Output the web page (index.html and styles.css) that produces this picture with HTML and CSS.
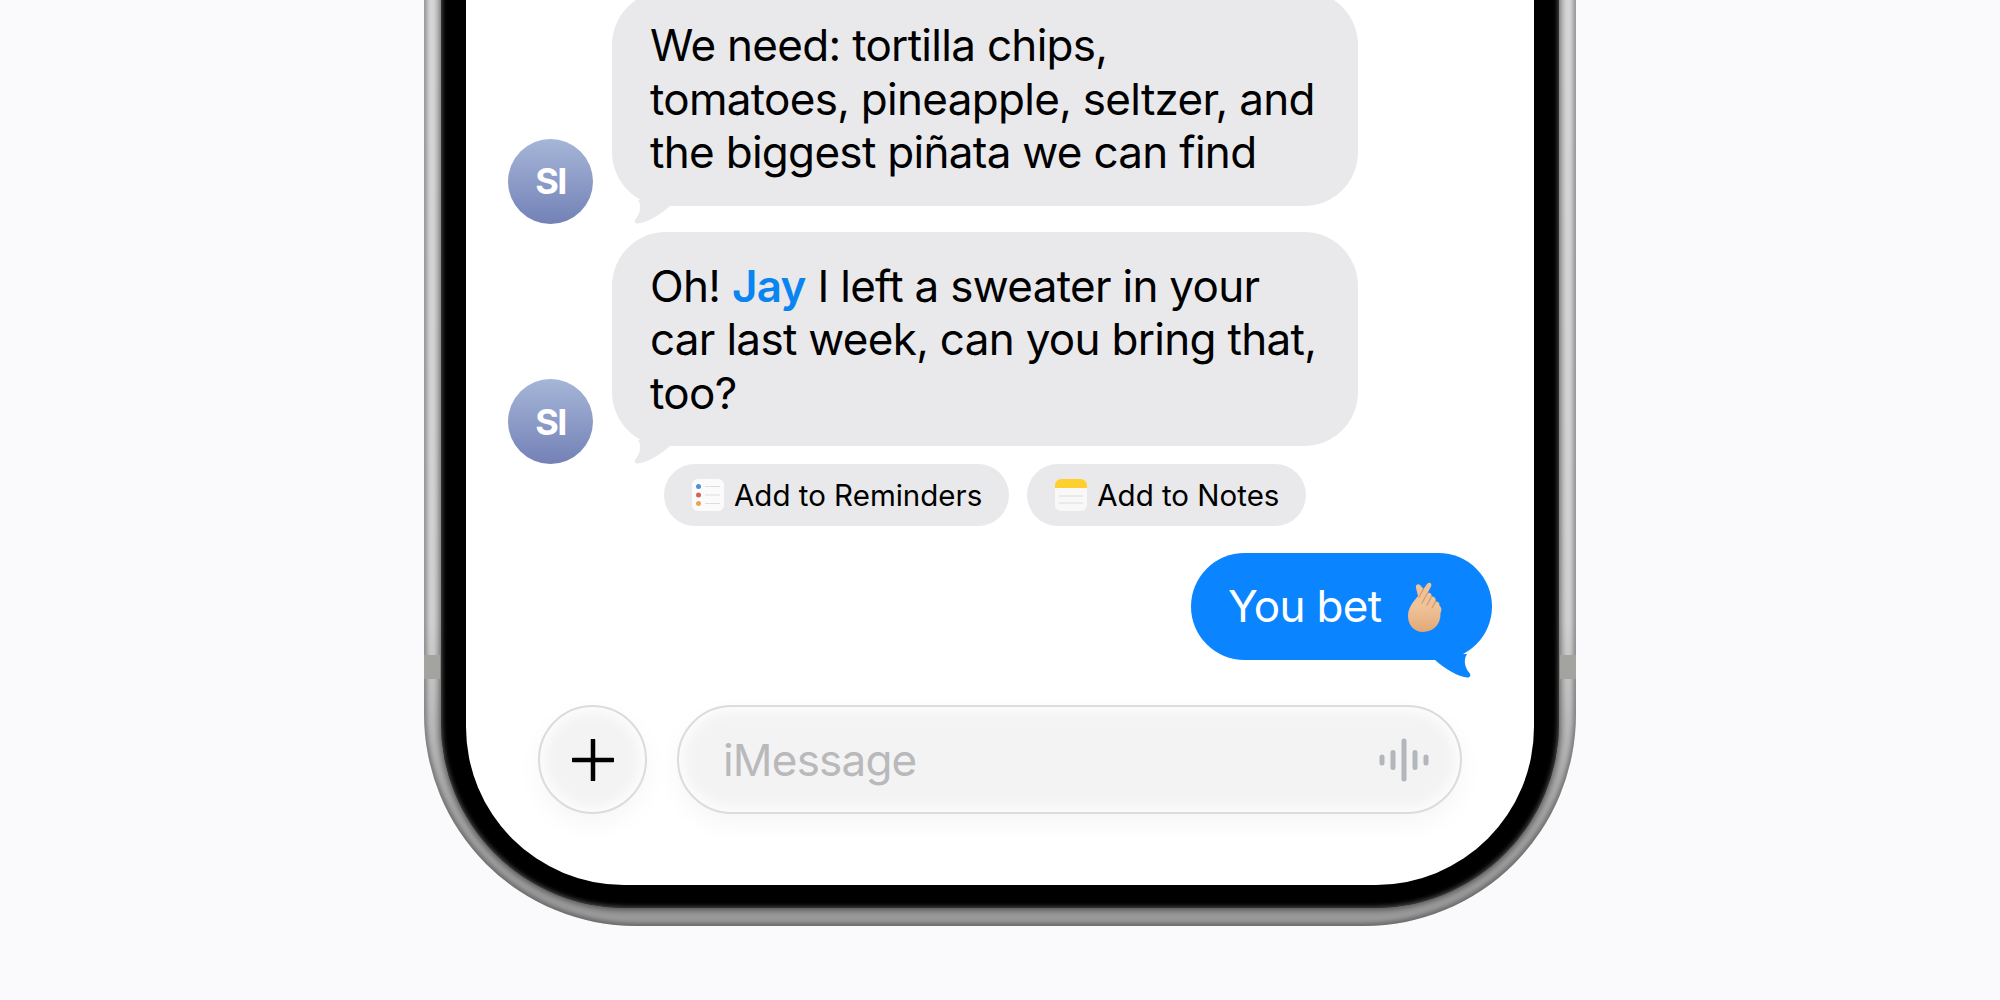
FILE: index.html
```html
<!DOCTYPE html>
<html lang="en">

<head>
    <meta charset="UTF-8">
    <title>Messages</title>
    <link rel="stylesheet" href="styles.css">
</head>

<body>
    <div class="phone">
        <i class="band band-left"></i>
        <i class="band band-right"></i>
        <div class="bezel">
            <div class="screen">
                <div class="thread">
                    <div class="row">
                        <div class="avatar">SI</div>
                        <div class="bubble">
                            We need: tortilla chips,<br>tomatoes, pineapple, seltzer, and<br>the biggest piñata we can find
                            <svg class="tail" viewBox="0 0 44 24"><path d="M12 0C16 6 14 14 9.500 19C8 21 8.500 24 12 23.500C22 22 34 15 44 6V0Z"/></svg>
                        </div>
                    </div>
                    <div class="row row-second">
                        <div class="avatar">SI</div>
                        <div class="bubble">
                            Oh! <span class="mention">Jay</span> I left a sweater in your<br>car last week, can you bring that,<br>too?
                            <svg class="tail" viewBox="0 0 44 24"><path d="M12 0C16 6 14 14 9.500 19C8 21 8.500 24 12 23.500C22 22 34 15 44 6V0Z"/></svg>
                        </div>
                    </div>
                    <div class="chips">
                        <div class="chip">
                            <svg class="chip-icon" viewBox="0 0 32 32">
                                <rect width="32" height="32" rx="6" fill="#fbfbfb"/>
                                <circle cx="6.500" cy="7.500" r="2.500" fill="#4d8fd8"/>
                                <circle cx="6.500" cy="16" r="2.500" fill="#d8605a"/>
                                <circle cx="6.500" cy="24.500" r="2.500" fill="#eca552"/>
                                <path d="M13 7.500H28M13 16H28M13 24.500H28" stroke="#dedede" stroke-width="1"/>
                            </svg>
                            Add to Reminders
                        </div>
                        <div class="chip">
                            <svg class="chip-icon" viewBox="0 0 32 32">
                                <rect width="32" height="32" rx="6" fill="#f8f8f8"/>
                                <path d="M0 9V6A6 6 0 0 1 6 0H26A6 6 0 0 1 32 6V9Z" fill="#fdd02f"/>
                                <path d="M4 17H28M4 24H28" stroke="#dcdcdc" stroke-width="1"/>
                            </svg>
                            Add to Notes
                        </div>
                    </div>
                    <div class="row row-mine">
                        <div class="bubble bubble-mine">
                            You bet
                            <svg class="emoji" viewBox="0 0 35 50">
                                <defs>
                                    <linearGradient id="skin" x1="0" y1="0" x2="0" y2="1">
                                        <stop offset="0.500" stop-color="#f0c298"/>
                                        <stop offset="1" stop-color="#e0a878"/>
                                    </linearGradient>
                                </defs>
                                <path d="M1 34C1 26 6 20 11 14L9 6C8 2 12 1 14 4L16.500 7L20 2C22 -0.500 25.500 1 24 4.500L20.500 11C23 10 25 12 24.500 14.500C27 14 29.500 16 28.500 19.500C31 19 33 21 32.500 24C34.500 25 35 28 33.500 31C34 42 27 50 16 50C7 50 1 43 1 34Z" fill="url(#skin)"/>
                                <path d="M16.500 7L12 15M20.500 11L15 21M24.500 14.500L20 23M28.500 19.500L25 26" stroke="#cf9a6c" stroke-width="1.200" fill="none" stroke-linecap="round"/>
                            </svg>
                            <svg class="tail tail-mine" viewBox="0 0 44 24"><path d="M12 0C16 6 14 14 9.500 19C8 21 8.500 24 12 23.500C22 22 34 15 44 6V0Z"/></svg>
                        </div>
                    </div>
                </div>
                <div class="composer">
                    <div class="plus">
                        <svg viewBox="0 0 42 42"><path d="M21 1V41M1 21H41" stroke="#000" stroke-width="4.500" stroke-linecap="round"/></svg>
                    </div>
                    <div class="field">
                        <span class="placeholder">iMessage</span>
                        <svg class="wave" viewBox="0 0 50 44"><path d="M3 19V25M14 14.500V29.500M25 3V41M36 14.500V29.500M47 19V25" stroke="#b3b6bb" stroke-width="5" stroke-linecap="round"/></svg>
                    </div>
                </div>
            </div>
        </div>
    </div>
</body>

</html>
```

FILE: styles.css
```css
* {
    margin: 0;
    padding: 0;
    box-sizing: border-box;
}

body {
    height: 1000px;
    overflow: hidden;
    background-color: #fafafc;
    font-family: "Inter", "Liberation Sans", sans-serif;
}

/* top of the phone is cut off by the window */
.phone {
    position: relative;
    width: 1152px;
    height: 956px;
    margin: -30px 0 0 424px;
    padding: 0 17px 18px;
    border-radius: 0 0 212px 212px;
    background: linear-gradient(#d8d8d8 0, #d2d2d2 68%, #a6a6a6 88%, #999 100%);
    box-shadow: inset 0 0 4px 3px rgba(0, 0, 0, 0.32);
}

.band {
    position: absolute;
    top: 685px;
    width: 16px;
    height: 24px;
    background-color: #a3a39f;
}

.band-left {
    left: 0;
}

.band-right {
    right: 0;
}

.bezel {
    height: 100%;
    padding: 0 25px 23px;
    border-radius: 0 0 185px 185px;
    background-color: #000;
    box-shadow: 0 0 6px 2px rgba(0, 0, 0, 0.5), inset 0 0 5px 1px #555;
}

.screen {
    display: flex;
    flex-direction: column;
    height: 100%;
    overflow: hidden;
    border-radius: 0 0 158px 158px;
    background-color: #fff;
}

.thread {
    padding: 21px 42px 0 42px;
}

.row {
    display: flex;
    align-items: flex-end;
    gap: 19px;
}

.row-second {
    margin-top: 26px;
}

.row-mine {
    justify-content: flex-end;
    margin-top: 27px;
}

.avatar {
    display: flex;
    align-items: center;
    justify-content: center;
    flex: none;
    width: 85px;
    height: 85px;
    margin-bottom: -18px;
    border-radius: 50%;
    background: linear-gradient(#a5b6d8, #7381b6);
    color: #fff;
    font-size: 36px;
    font-weight: 700;
    letter-spacing: -1.500px;
}

.bubble {
    position: relative;
    width: 746px;
    padding: 28px 30px 26px 38px;
    border-radius: 54px;
    background-color: #e9e9eb;
    color: #000;
    font-size: 44px;
    line-height: 53.500px;
    letter-spacing: -0.7px;
}

.tail {
    position: absolute;
    left: 14px;
    bottom: -18px;
    width: 44px;
    height: 24px;
    fill: #e9e9eb;
}

.mention {
    color: #0a84f0;
    font-weight: 600;
}

.chips {
    display: flex;
    gap: 18px;
    margin: 18px 0 0 156px;
}

.chip {
    display: flex;
    align-items: center;
    gap: 10px;
    height: 62px;
    padding: 0 27px 0 28px;
    border-radius: 31px;
    background-color: #e9e9eb;
    font-size: 29.500px;
}

.chip-icon {
    width: 32px;
    height: 32px;
}

.bubble-mine {
    display: flex;
    align-items: center;
    gap: 26px;
    width: 301px;
    height: 107px;
    padding: 0 0 0 37px;
    background-color: #0a84ff;
    color: #fff;
}

.emoji {
    width: 35px;
    height: 50px;
}

.tail-mine {
    left: auto;
    right: 13px;
    transform: scaleX(-1);
    fill: #0a84ff;
}

.composer {
    display: flex;
    gap: 30px;
    margin-top: 45px;
    padding: 0 72px;
}

.plus,
.field {
    height: 109px;
    border: 2px solid #dcdcdc;
    border-radius: 55px;
    background-color: #f3f3f4;
    box-shadow: 0 10px 26px rgba(0, 0, 0, 0.04), inset 0 0 16px 3px #fff;
}

.plus {
    display: flex;
    align-items: center;
    justify-content: center;
    flex: none;
    width: 109px;
}

.plus svg {
    width: 42px;
    height: 42px;
}

.field {
    display: flex;
    align-items: center;
    justify-content: space-between;
    flex: 1;
    padding: 0 31px 0 44px;
}

.placeholder {
    color: #b9b9bb;
    font-size: 44px;
    letter-spacing: -0.8px;
}

.wave {
    width: 50px;
    height: 44px;
}
```
